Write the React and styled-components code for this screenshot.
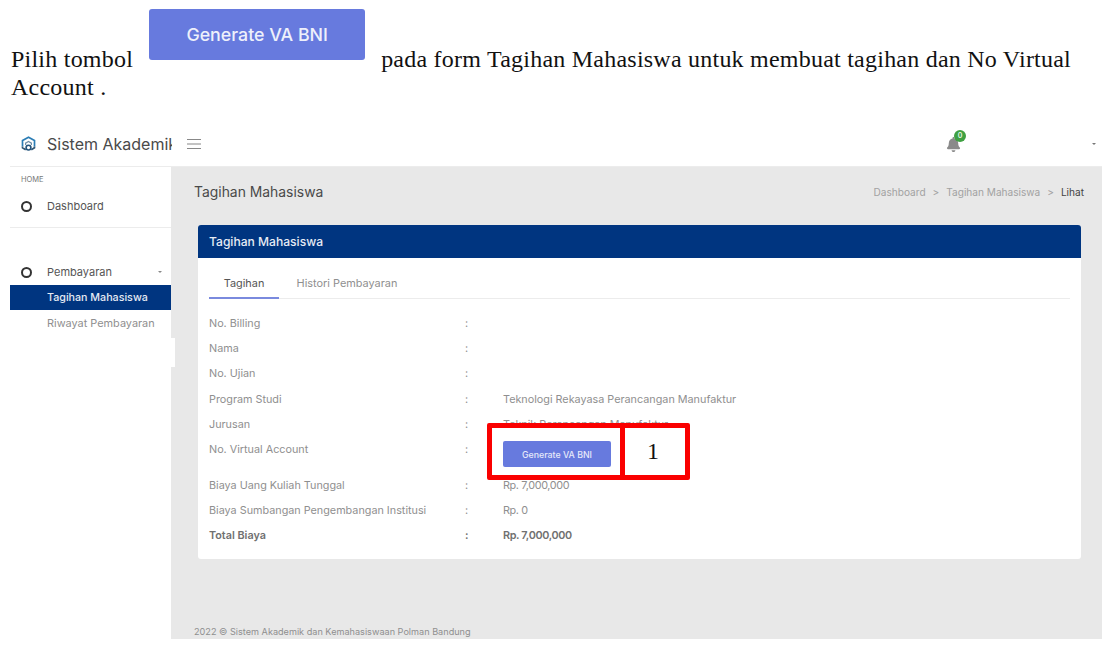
import React from 'react';
import styled, { createGlobalStyle } from 'styled-components';
import { FaBell } from 'react-icons/fa';

const GlobalStyle = createGlobalStyle`
  html, body {
    margin: 0;
    padding: 0;
    background: #fff;
  }
  * {
    box-sizing: border-box;
  }
`;

const Page = styled.div`
  position: relative;
  width: 1118px;
  height: 654px;
  overflow: hidden;
  background: #fff;
  font-family: 'Inter', 'Liberation Sans', sans-serif;
`;

const Intro = styled.div`
  height: 125px;
  padding-left: 11px;
  font-family: 'Liberation Serif', serif;
  font-size: 24px;
  letter-spacing: 0.23px;
  color: #111;
`;

const IntroLine = styled.div`
  display: flex;
  align-items: flex-end;
  height: 73px;
  line-height: 28px;
`;

const IntroAccount = styled.div`
  line-height: 29px;
`;

const InlineButton = styled.div`
  width: 216px;
  height: 51px;
  margin: 9px 16px 0 16px;
  align-self: flex-start;
  display: flex;
  align-items: center;
  justify-content: center;
  border-radius: 3px;
  background: #677ade;
  color: #eef0fb;
  font-family: 'Inter', sans-serif;
  font-size: 17.8px;
  letter-spacing: 0;
  font-weight: 500;
`;

const Shot = styled.div`
  width: 1092px;
  height: 514px;
  margin-left: 10px;
  display: flex;
  flex-direction: column;
`;

const TopBar = styled.header`
  height: 42px;
  padding-bottom: 3px;
  display: flex;
  align-items: center;
  border-bottom: 1px solid #ececec;
`;

const Brand = styled.div`
  width: 162px;
  padding-left: 11px;
  display: flex;
  align-items: center;
  gap: 11px;
  overflow: hidden;
  white-space: nowrap;
  color: #4a4a4a;
  font-size: 16px;
`;

const LogoMark = styled.svg`
  width: 15px;
  height: 16px;
  flex-shrink: 0;
`;

const Burger = styled.svg`
  width: 14px;
  height: 12px;
  margin-left: 15px;
`;

const BellWrap = styled.div`
  position: relative;
  margin-left: auto;
  margin-right: 131px;
  display: flex;
  color: #8a8a8a;
  font-size: 15px;
`;

const Badge = styled.span`
  position: absolute;
  top: -7px;
  left: 8px;
  width: 12px;
  height: 12px;
  border-radius: 50%;
  display: flex;
  align-items: center;
  justify-content: center;
  background: #3fa142;
  color: #e8f5e8;
  font-size: 7px;
  font-weight: 600;
`;

const Caret = styled.span`
  width: 0;
  height: 0;
  margin-right: 6px;
  border-left: 2.5px solid transparent;
  border-right: 2.5px solid transparent;
  border-top: 2px solid #777;
`;

const Body = styled.div`
  flex: 1;
  display: flex;
  min-height: 0;
`;

const Sidebar = styled.nav`
  width: 161px;
  flex-shrink: 0;
  display: flex;
  flex-direction: column;
  background: #fff;
`;

const SectionLabel = styled.div`
  height: 20px;
  padding: 9px 0 0 11px;
  font-size: 7.5px;
  line-height: 8px;
  color: #777;
`;

const MenuItem = styled.div`
  height: ${p => p.$height || 26}px;
  display: flex;
  align-items: center;
  gap: 15px;
  padding: 0 9px 0 11px;
  color: #555;
  font-size: 11px;
`;

const Dot = styled.span`
  width: 11px;
  height: 11px;
  border: 2px solid #333;
  border-radius: 50%;
`;

const MenuCaret = styled.span`
  width: 0;
  height: 0;
  margin-left: auto;
  border-left: 2.5px solid transparent;
  border-right: 2.5px solid transparent;
  border-top: 2.5px solid #888;
`;

const Divider = styled.div`
  height: 1px;
  margin-top: 2px;
  margin-bottom: 31px;
  background: #ececec;
`;

const SubItem = styled.div`
  height: 25px;
  padding-left: 37px;
  display: flex;
  align-items: center;
  font-size: ${p => (p.$active ? 10.7 : 10.9)}px;
  background: ${p => (p.$active ? '#003580' : 'transparent')};
  color: ${p => (p.$active ? '#e6ebf4' : '#8f8f8f')};
  font-weight: ${p => (p.$active ? 500 : 400)};
`;

const Main = styled.main`
  flex: 1;
  display: flex;
  flex-direction: column;
  background: #e8e8e8;
  padding: 0 18px 0 23px;
`;

const TitleRow = styled.div`
  height: 58px;
  padding-bottom: 8px;
  display: flex;
  align-items: center;
  justify-content: space-between;
`;

const PageTitle = styled.h1`
  margin: 0;
  font-size: 13.9px;
  font-weight: 400;
  color: #4a4a4a;
`;

const Breadcrumb = styled.div`
  display: flex;
  gap: 7px;
  font-size: 10.1px;
  color: #a2a2a2;
`;

const Crumb = styled.span`
  color: ${p => (p.$current ? '#444' : '#a2a2a2')};
`;

const Card = styled.section`
  width: 883px;
  height: 334px;
  margin-left: 4px;
  background: #fff;
  border-radius: 3px;
  overflow: hidden;
`;

const CardHeader = styled.div`
  height: 33px;
  padding-left: 11px;
  display: flex;
  align-items: center;
  background: #003580;
  color: #e6ebf4;
  font-size: 12.1px;
  font-weight: 500;
`;

const CardBody = styled.div`
  padding: 11px 11px 0;
`;

const Tabs = styled.div`
  height: 30px;
  display: flex;
  border-bottom: 1px solid #ececec;
  font-size: 10.9px;
`;

const Tab = styled.div`
  width: ${p => p.$width}px;
  height: 30px;
  display: flex;
  align-items: center;
  justify-content: center;
  color: ${p => (p.$active ? '#555' : '#8f8f8f')};
  border-bottom: 2px solid ${p => (p.$active ? '#7a8ade' : 'transparent')};
`;

const Rows = styled.div`
  padding-top: 12px;
`;

const Row = styled.div`
  display: grid;
  grid-template-columns: 256px 38px 1fr;
  height: ${p => p.$height || 25.2}px;
  line-height: 25px;
  font-size: 10.8px;
  color: ${p => (p.$bold ? '#707070' : '#8f8f8f')};
  font-weight: ${p => (p.$bold ? 600 : 400)};
`;

const Value = styled.span`
  letter-spacing: ${p => (p.$amount ? '-0.35px' : '0')};
`;

const VaButton = styled.div`
  width: 108px;
  height: 26px;
  display: flex;
  align-items: center;
  justify-content: center;
  border-radius: 2px;
  background: #677ade;
  color: #e6e9fa;
  font-size: 8.8px;
  font-weight: 500;
`;

const Footer = styled.footer`
  margin-top: auto;
  height: 15px;
  line-height: 15px;
  font-size: 9.15px;
  color: #8f8f8f;
  white-space: nowrap;
`;

const SidebarPatch = styled.div`
  position: absolute;
  left: 171px;
  top: 338px;
  width: 4px;
  height: 29px;
  background: #fff;
`;

const Callout = styled.div`
  position: absolute;
  left: ${p => p.$left}px;
  top: 423px;
  width: ${p => p.$width}px;
  height: 57px;
  padding-right: 4px;
  border: 5px solid #fa0000;
  border-radius: 2px;
  background: #fff;
  display: flex;
  align-items: center;
  justify-content: center;
  font-family: 'Liberation Serif', serif;
  font-size: 24px;
  color: #111;
`;

const ButtonOverlay = styled(VaButton)`
  position: absolute;
  left: 503px;
  top: 441px;
`;

const rows = [
  { label: 'No. Billing' },
  { label: 'Nama' },
  { label: 'No. Ujian' },
  { label: 'Program Studi', value: 'Teknologi Rekayasa Perancangan Manufaktur' },
  { label: 'Jurusan', value: 'Teknik Perancangan Manufaktur' },
  { label: 'No. Virtual Account', height: 36 },
  { label: 'Biaya Uang Kuliah Tunggal', value: 'Rp. 7,000,000', amount: true },
  { label: 'Biaya Sumbangan Pengembangan Institusi', value: 'Rp. 0', amount: true },
  { label: 'Total Biaya', value: 'Rp. 7,000,000', amount: true, bold: true },
];

function Logo() {
  return (
    <LogoMark viewBox="0 0 15 16">
      <path d="M1.5 10.5V4.6L7.5 1.2l6 3.4v5.9" fill="none" stroke="#2b7db5" strokeWidth="1.7" />
      <path d="M1.5 10.5v1.2l3.2 2M13.5 10.5v1.2l-3.2 2" fill="none" stroke="#2f5573" strokeWidth="1.7" />
      <path d="M4.6 9V7.2l2.9-1.7 2.9 1.7V9" fill="none" stroke="#6f8ea6" strokeWidth="1.2" />
      <circle cx="7.5" cy="11.6" r="2.4" fill="none" stroke="#24547c" strokeWidth="1.6" />
    </LogoMark>
  );
}

export default function App() {
  return (
    <Page>
      <GlobalStyle />
      <Intro>
        <IntroLine>
          Pilih tombol
          <InlineButton>Generate VA BNI</InlineButton>
          pada form Tagihan Mahasiswa untuk membuat tagihan dan No Virtual
        </IntroLine>
        <IntroAccount>Account .</IntroAccount>
      </Intro>
      <Shot>
        <TopBar>
          <Brand>
            <Logo />
            Sistem Akademik
          </Brand>
          <Burger viewBox="0 0 14 12">
            <path d="M0 1.5H14M0 6H14M0 10.5H14" stroke="#888" strokeWidth="1.2" />
          </Burger>
          <BellWrap>
            <FaBell />
            <Badge>0</Badge>
          </BellWrap>
          <Caret />
        </TopBar>
        <Body>
          <Sidebar>
            <SectionLabel>HOME</SectionLabel>
            <MenuItem $height={38}>
              <Dot />
              Dashboard
            </MenuItem>
            <Divider />
            <MenuItem>
              <Dot />
              Pembayaran
              <MenuCaret />
            </MenuItem>
            <SubItem $active>Tagihan Mahasiswa</SubItem>
            <SubItem>Riwayat Pembayaran</SubItem>
          </Sidebar>
          <Main>
            <TitleRow>
              <PageTitle>Tagihan Mahasiswa</PageTitle>
              <Breadcrumb>
                <Crumb>Dashboard</Crumb>
                <span>&gt;</span>
                <Crumb>Tagihan Mahasiswa</Crumb>
                <span>&gt;</span>
                <Crumb $current>Lihat</Crumb>
              </Breadcrumb>
            </TitleRow>
            <Card>
              <CardHeader>Tagihan Mahasiswa</CardHeader>
              <CardBody>
                <Tabs>
                  <Tab $width={70} $active>Tagihan</Tab>
                  <Tab $width={136}>Histori Pembayaran</Tab>
                </Tabs>
                <Rows>
                  {rows.map(row => (
                    <Row key={row.label} $height={row.height} $bold={row.bold}>
                      <span>{row.label}</span>
                      <span>:</span>
                      <Value $amount={row.amount}>{row.value}</Value>
                    </Row>
                  ))}
                </Rows>
              </CardBody>
            </Card>
            <Footer>2022 © Sistem Akademik dan Kemahasiswaan Polman Bandung</Footer>
          </Main>
        </Body>
      </Shot>
      <SidebarPatch />
      <Callout $left={487} $width={138} />
      <ButtonOverlay>Generate VA BNI</ButtonOverlay>
      <Callout $left={620} $width={70}>1</Callout>
    </Page>
  );
}
